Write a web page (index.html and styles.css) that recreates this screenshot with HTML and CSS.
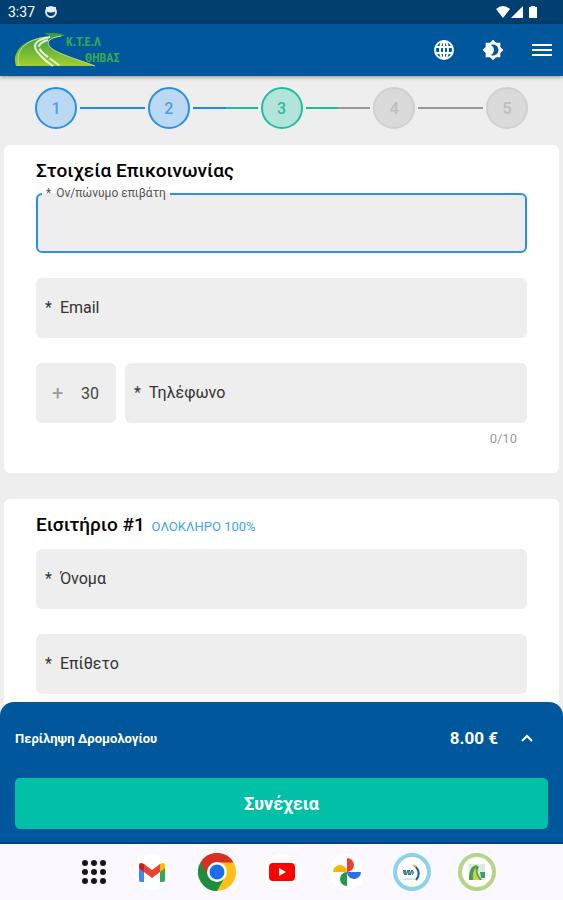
FILE: index.html
```html
<!DOCTYPE html>
<html lang="el">

<head>
    <meta charset="UTF-8">
    <meta name="viewport" content="width=device-width, initial-scale=1.0">
    <title>Κ.Τ.Ε.Λ Θήβας</title>
    <link rel="stylesheet" href="styles.css">
</head>

<body>
    <div class="status-bar">
        <span>3:37</span>
        <svg width="14" height="14" viewBox="0 0 14 14">
            <circle cx="7" cy="7" r="5" fill="none" stroke="#d5e8f0" stroke-width="2" />
            <path d="M2 2h10v4q-5 3-10 0z" fill="#e6f1f6" />
        </svg>
        <svg class="status-icons" width="42" height="14" viewBox="0 0 42 14" fill="#fff">
            <path d="M0 4Q7-2 14 4L7 13z" />
            <path d="M27 1v12H15z" />
            <path d="M35 1h4v1h2v11h-8V2h2z" />
        </svg>
    </div>

    <header class="app-bar">
        <a class="logo" href="#" aria-label="Κ.Τ.Ε.Λ Θήβας">
            <svg width="110" height="38" viewBox="0 0 110 38">
                <defs>
                    <linearGradient id="road" x1="0" y1="0" x2="0" y2="1">
                        <stop offset="0" stop-color="#329b48" />
                        <stop offset="1" stop-color="#a5ce2b" />
                    </linearGradient>
                </defs>
                <path d="M2 35C-3 20 10 7 36 5L30 2h13l8 2-5 2C35 7 32 11 36 16c7 7 27 12 45 19z" fill="url(#road)" />
                <path d="M5 35C1 21 9 9 33 6" fill="none" stroke="#c8df91" stroke-width="1" />
                <path d="M36 6C20 9 17 15 26 24q6 7 13 11" fill="none" stroke="#e5f3d8" stroke-width="2" />
                <path d="M34 9C24 12 22 16 30 23l16 12" fill="none" stroke="#e5f3d8" stroke-width="2" stroke-dasharray="12 2" />
                <path d="M47 5C35 7 32 11 36 16c7 7 27 12 45 19" fill="none" stroke="#c8df91" stroke-width="1" />
                <text class="logo-text" x="52" y="15">Κ.Τ.Ε.Λ</text>
                <text class="logo-text" x="71" y="31">ΘΗΒΑΣ</text>
            </svg>
        </a>
        <button class="icon-button" type="button" aria-label="Γλώσσα">
            <svg width="20" height="20" viewBox="0 0 20 20" fill="none" stroke="#fff" stroke-width="2">
                <circle cx="10" cy="10" r="9" />
                <ellipse cx="10" cy="10" rx="4" ry="9" />
                <path d="M2 7h16M2 13h16M10 1v18" />
            </svg>
        </button>
        <button class="icon-button" type="button" aria-label="Θέμα">
            <svg width="22" height="22" viewBox="0 0 24 24" fill="#fff">
                <path d="M20 8.700V4h-4.700L12 .7 8.700 4H4v4.700L.7 12 4 15.300V20h4.700l3.300 3.300 3.300-3.300H20v-4.700l3.300-3.300zM12 18c-.9 0-1.700-.2-2.500-.6C11.600 16.500 13 14.400 13 12s-1.400-4.500-3.500-5.400C10.300 6.200 11.100 6 12 6c3.300 0 6 2.700 6 6s-2.700 6-6 6z" />
            </svg>
        </button>
        <button class="icon-button" type="button" aria-label="Μενού">
            <svg width="20" height="16" viewBox="0 0 20 16" stroke="#fff" stroke-width="2">
                <path d="M0 3h20M0 8h20M0 13h20" />
            </svg>
        </button>
    </header>

    <main class="content">
        <div class="steps">
            <span class="step done">1</span>
            <span class="line line-done"></span>
            <span class="step done">2</span>
            <span class="line line-to-current"></span>
            <span class="step current">3</span>
            <span class="line line-from-current"></span>
            <span class="step">4</span>
            <span class="line"></span>
            <span class="step">5</span>
        </div>

        <section class="card">
            <h2>Στοιχεία Επικοινωνίας</h2>
            <div class="field focused">
                <input type="text" id="passenger" name="passenger" required>
                <label for="passenger"><span class="star">*</span>Ον/πώνυμο επιβάτη</label>
            </div>
            <div class="field">
                <input type="email" id="email" name="email" required>
                <label for="email"><span class="star">*</span>Email</label>
            </div>
            <div class="phone-row">
                <div class="field prefix">
                    <label for="prefix">+</label>
                    <input type="text" id="prefix" name="prefix" value="30">
                </div>
                <div class="field">
                    <input type="tel" id="phone" name="phone" maxlength="10" required>
                    <label for="phone"><span class="star">*</span>Τηλέφωνο</label>
                </div>
            </div>
            <p class="counter">0/10</p>
        </section>

        <section class="card">
            <h2>Εισιτήριο #1 <span class="ticket-type">ΟΛΟΚΛΗΡΟ 100%</span></h2>
            <div class="field">
                <input type="text" id="firstName" name="firstName" required>
                <label for="firstName"><span class="star">*</span>Όνομα</label>
            </div>
            <div class="field">
                <input type="text" id="lastName" name="lastName" required>
                <label for="lastName"><span class="star">*</span>Επίθετο</label>
            </div>
        </section>
    </main>

    <footer class="summary">
        <button class="summary-row" type="button">
            <span class="summary-title">Περίληψη Δρομολογίου</span>
            <span class="price">8.00 €</span>
            <svg width="12" height="8" viewBox="0 0 12 8" fill="none" stroke="#fff" stroke-width="2">
                <path d="M1 7l5-5 5 5" />
            </svg>
        </button>
        <button class="submit" type="button">Συνέχεια</button>
    </footer>

    <nav class="taskbar">
        <button class="task apps" type="button" aria-label="Εφαρμογές">
            <svg width="24" height="24" viewBox="0 0 24 24" fill="#16161a">
                <circle cx="3" cy="3" r="3" /><circle cx="12" cy="3" r="3" /><circle cx="21" cy="3" r="3" />
                <circle cx="3" cy="12" r="3" /><circle cx="12" cy="12" r="3" /><circle cx="21" cy="12" r="3" />
                <circle cx="3" cy="21" r="3" /><circle cx="12" cy="21" r="3" /><circle cx="21" cy="21" r="3" />
            </svg>
        </button>
        <button class="task" type="button" aria-label="Gmail">
            <svg width="38" height="38" viewBox="0 0 38 38">
                <circle cx="19" cy="19" r="18" fill="#fff" />
                <path d="M6 13l5 4v12H8q-2 0-2-2z" fill="#4285f4" />
                <path d="M27 17l5-4v14q0 2-2 2h-3z" fill="#34a853" />
                <path d="M27 11q5-3 5 2v2l-5 4z" fill="#fbbc04" />
                <path d="M11 11l8 6 8-6v8l-8 6-8-6z" fill="#ea4335" />
                <path d="M6 15v-2q0-5 5-2v8z" fill="#c5221f" />
            </svg>
        </button>
        <button class="task" type="button" aria-label="Chrome">
            <svg width="38" height="38" viewBox="0 0 38 38">
                <circle cx="19" cy="19" r="19" fill="#fbc116" />
                <path d="M19 19L2.500 9.500A19 19 0 0 0 19 38l8.200-14.200z" fill="#1e8e3e" />
                <path d="M2.500 9.500A19 19 0 0 1 35.500 9.500H19L10.800 23.800z" fill="#d93025" />
                <circle cx="19" cy="19" r="10" fill="#fff" />
                <circle cx="19" cy="19" r="7.500" fill="#1a6fe8" />
            </svg>
        </button>
        <button class="task" type="button" aria-label="YouTube">
            <svg width="38" height="38" viewBox="0 0 38 38">
                <circle cx="19" cy="19" r="18" fill="#fff" />
                <rect x="6" y="10" width="26" height="18" rx="4" fill="#f00" />
                <path d="M16 15v8l7-4z" fill="#fff" />
            </svg>
        </button>
        <button class="task" type="button" aria-label="Photos">
            <svg width="38" height="38" viewBox="0 0 38 38">
                <circle cx="19" cy="19" r="18" fill="#fff" />
                <path d="M19 5a7 7 0 0 1 0 14z" fill="#ea4335" />
                <path d="M33 19a7 7 0 0 1-14 0z" fill="#2b6fe8" />
                <path d="M19 33a7 7 0 0 1 0-14z" fill="#23984b" />
                <path d="M5 19a7 7 0 0 1 14 0z" fill="#fbb605" />
            </svg>
        </button>
        <button class="task" type="button" aria-label="Δρομολόγια">
            <svg width="38" height="38" viewBox="0 0 38 38">
                <circle cx="19" cy="19" r="17" fill="#fff" stroke="#8dd2ea" stroke-width="4" />
                <path d="M10 18h10M11 21h9" stroke="#35768f" stroke-width="2" stroke-dasharray="3 1" />
                <path d="M10 19.500h11" stroke="#5d93a8" stroke-width="2" />
                <path d="M10 26h12" stroke="#a9cbd6" stroke-width="1" />
                <path d="M22 13q7 7 1 14" fill="none" stroke="#24608c" stroke-width="2" />
                <path d="M20 12l3 2" stroke="#e9b44c" stroke-width="2" />
            </svg>
        </button>
        <button class="task" type="button" aria-label="ΚΤΕΛ Θήβας">
            <svg width="38" height="38" viewBox="0 0 38 38">
                <circle cx="19" cy="19" r="17" fill="#fff" stroke="#b7d58a" stroke-width="4" />
                <path d="M11 11h16v16H11z" fill="#dce8df" />
                <path d="M11 27c0-7 1-13 7-15l3 2c-3 4-1 8 3 13z" fill="#469b46" />
                <path d="M15 27q-1-8 3-13-1 7 4 13" fill="#bed44b" />
                <path d="M22 19h5v6h-4z" fill="#4b9b66" />
            </svg>
        </button>
    </nav>
</body>

</html>
```
FILE: styles.css
```css
* {
    box-sizing: border-box;
}

body {
    display: flex;
    flex-direction: column;
    height: 100vh;
    margin: 0;
    font-family: Roboto, "Noto Sans", sans-serif;
    font-size: 16px;
    color: #222;
    background-color: #eee;
}

button {
    padding: 0;
    border: none;
    background: none;
    font-family: inherit;
    cursor: pointer;
}

svg {
    display: block;
}

.status-bar {
    display: flex;
    align-items: center;
    gap: 9px;
    height: 24px;
    flex-shrink: 0;
    padding: 0 25px 0 8px;
    font-size: 14px;
    color: #fff;
    background-color: #003f70;
}

.status-icons {
    margin-left: auto;
}

.app-bar {
    display: flex;
    align-items: center;
    gap: 25px;
    height: 52px;
    flex-shrink: 0;
    padding: 0 9px 0 14px;
    background-color: #01579b;
    box-shadow: 0 1px 4px rgba(0, 0, 0, 0.4);
    z-index: 1;
}

.logo {
    margin-right: auto;
}

.logo-text {
    font-family: "Liberation Sans Narrow", "Roboto Condensed", Roboto, sans-serif;
    font-size: 12px;
    font-weight: bold;
    fill: #35a852;
}

.icon-button {
    display: flex;
    align-items: center;
    justify-content: center;
    width: 24px;
    height: 24px;
}

.content {
    flex: 1;
    min-height: 0;
    padding: 11px 4px 0;
    overflow: hidden;
}

/* stepper */
.steps {
    display: flex;
    align-items: center;
    gap: 3px;
    margin-bottom: 16px;
    padding: 0 31px;
}

.step {
    display: flex;
    align-items: center;
    justify-content: center;
    width: 42px;
    height: 42px;
    border: 2px solid #d0d0d0;
    border-radius: 50%;
    font-weight: 500;
    color: #bdbdbd;
    background-color: #dadada;
}

.step.done {
    border-color: #2a8fe8;
    color: #4a9fe6;
    background-color: #bbd9f2;
}

.step.current {
    border-color: #1fbf9c;
    color: #2abb9c;
    background-color: #b2e4d9;
}

.line {
    flex: 1;
    height: 2px;
    background-color: #999;
}

.line-done {
    background-color: #1e88e5;
}

.line-to-current {
    background: linear-gradient(to right, #1e88e5 50%, #1abc9c 50%);
}

.line-from-current {
    background: linear-gradient(to right, #1abc9c 50%, #999 50%);
}

.card {
    display: flex;
    flex-direction: column;
    margin-bottom: 26px;
    padding: 14px 32px 26px;
    border-radius: 6px;
    background-color: #fff;
}

h2 {
    margin: 0 0 10px;
    font-size: 19px;
    font-weight: 500;
    line-height: 24px;
    color: #000;
}

.ticket-type {
    margin-left: 2px;
    font-size: 13px;
    font-weight: 400;
    color: #42a0f5;
}

.field {
    position: relative;
    flex: 1;
    margin-bottom: 25px;
}

.field input {
    display: block;
    width: 100%;
    height: 60px;
    padding: 0 10px;
    border: none;
    border-radius: 6px;
    outline: none;
    font-family: inherit;
    font-size: 16px;
    color: #444;
    background-color: #eee;
}

.field label {
    position: absolute;
    top: 18px;
    left: 9px;
    line-height: 24px;
    color: #333;
    pointer-events: none;
}

.star {
    margin-right: 8px;
}

.focused input {
    border: 2px solid #2a8fe8;
}

/* label sits in a gap of the outline */
.focused label {
    top: -7px;
    left: 6px;
    padding: 0 4px;
    font-size: 12px;
    line-height: 14px;
    color: #555;
    background: linear-gradient(#fff 50%, #eee 50%);
}

.focused .star {
    margin-right: 5px;
}

.phone-row {
    display: flex;
    gap: 9px;
}

.phone-row .field {
    margin-bottom: 8px;
}

.phone-row .prefix {
    flex: 0 0 80px;
}

.prefix input {
    padding-left: 45px;
}

.prefix label {
    left: 16px;
    font-size: 20px;
    color: #999;
}

.counter {
    margin: 0 10px 0 0;
    font-size: 13px;
    line-height: 16px;
    text-align: right;
    color: #999;
}

/* bottom sheet overlaps the end of the list */
.summary {
    position: relative;
    flex-shrink: 0;
    margin-top: -16px;
    padding: 16px 15px 13px;
    border-bottom: 2px solid #003c8f;
    border-radius: 14px 14px 0 0;
    background-color: #01579b;
}

.summary-row {
    display: flex;
    align-items: center;
    width: 100%;
    height: 40px;
    margin-bottom: 20px;
    padding-right: 15px;
    color: #fff;
}

.summary-title {
    margin-right: auto;
    font-size: 13px;
    font-weight: bold;
}

.price {
    margin-right: 23px;
    font-size: 17px;
    font-weight: bold;
}

.submit {
    display: block;
    width: 100%;
    height: 51px;
    border-radius: 5px;
    font-size: 18px;
    font-weight: bold;
    color: #fff;
    background-color: #02c0a8;
}

.taskbar {
    display: flex;
    align-items: center;
    justify-content: center;
    gap: 27px;
    flex-shrink: 0;
    height: 56px;
    background-color: #fbf8ff;
}

.task {
    display: flex;
    align-items: center;
    justify-content: center;
    width: 38px;
    height: 38px;
}

.apps {
    justify-content: flex-end;
}
```
